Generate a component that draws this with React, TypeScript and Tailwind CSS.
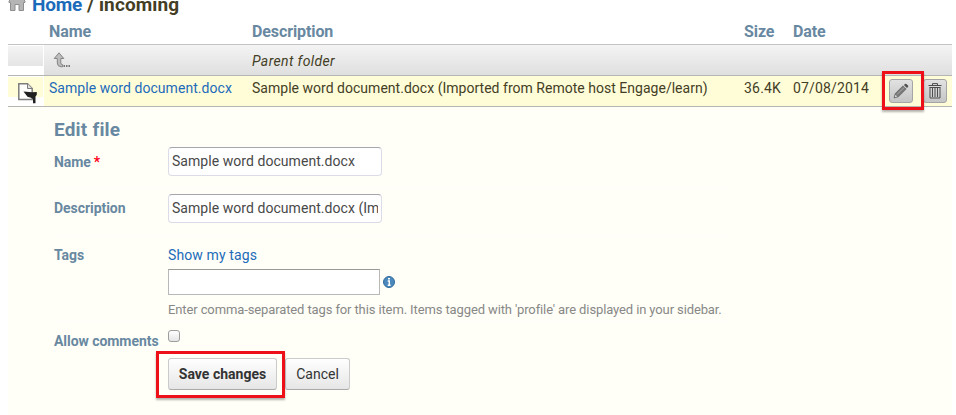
import React from "react";

const columns = "grid grid-cols-[36px_208px_492px_49px_96px_1fr]";

function HomeIcon() {
  return (
    <svg width="18" height="19" viewBox="0 0 18 19" className="block">
      <path d="M1 9 L9 1 L17 9 V10.5 H15.5 V18.5 H11 V12.5 H7 V18.5 H2.5 V10.5 H1Z" fill="#b5b5b5" stroke="#8e8e8e" />
    </svg>
  );
}

function ParentIcon() {
  return (
    <svg width="18" height="16" viewBox="0 0 18 16" className="block">
      <path d="M6 .8 L10.8 6.5 H7.8 V11 Q7.8 12.6 9.6 12.6 V14.8 H8.2 Q4.3 14.6 4.3 11 V6.5 H1.2Z" fill="#bdbdbd" stroke="#858585" strokeWidth="1" />
      <path d="M10.5 13.9H12M13 13.9H14.5M15.5 13.9H17" stroke="#777" strokeWidth="2" />
    </svg>
  );
}

function FileIcon() {
  return (
    <svg width="21" height="22" viewBox="0 0 21 22" className="block">
      <path d="M1.8 1.8 H10.5 L15.2 6.5 V17.5 H1.8Z" fill="#fdfdfb" stroke="#7d7d7d" strokeWidth="1.5" />
      <path d="M10.5 1.8 V6.5 H15.2" fill="#ddd" stroke="#7d7d7d" />
      <path d="M6.5 9.6 L15 10.2 L19.8 10 V12.8 L18.5 14.5 V21.3 H16 V17 L14 15.8 L10.5 14.8Z" fill="#202020" />
    </svg>
  );
}

function PencilIcon() {
  return (
    <svg width="16" height="16" viewBox="0 0 16 16" className="block">
      <path d="M1 15 L2.2 10.6 L10 2.8 L13.2 6 L5.4 13.8Z" fill="#787878" stroke="#5a5a5a" strokeWidth=".6" />
      <path d="M10.9 2 L12 .9 Q12.7 .4 13.4 1 L15 2.6 Q15.6 3.3 15 4 L14 5.1Z" fill="#505050" />
      <path d="M4.2 11.4 L11.2 4.4" stroke="#aaa" strokeWidth="1" />
      <path d="M2.4 11.8 L4.2 13.6 L1.9 14.2Z" fill="#ddd" />
    </svg>
  );
}

function TrashIcon() {
  return (
    <svg width="14" height="16" viewBox="0 0 14 16" className="block">
      <path d="M4.5 2 V.6 H9.5 V2 M.5 2.5 H13.5 M2 4.5 V15 H12 V4.5 M1.5 4.5 H12.5" fill="none" stroke="#4d4d4d" />
      <path d="M4.5 5V14 M7 5V14 M9.5 5V14" fill="none" stroke="#4d4d4d" />
    </svg>
  );
}

function IconButton({ children }: { children: React.ReactNode }) {
  return (
    <button className="flex size-6 items-center justify-center rounded-[3px] border border-[#a5a5a5] bg-linear-to-b from-[#e2e2e2] to-[#c5c5c5]">
      {children}
    </button>
  );
}

function Label({ children }: { children: React.ReactNode }) {
  return <div className="w-[114px] shrink-0 whitespace-nowrap font-bold tracking-[-0.05px] text-[#6888a1]">{children}</div>;
}

const inputClass =
  "block h-[29px] w-[214px] rounded-[4px] border border-[#dcdce8] border-t-[#a5a5ae] bg-white px-[3px] pb-px text-[14px] tracking-[0.05px] text-[#484848] outline-none";

export default function App() {
  return (
    <div className="h-[415px] w-[956px] overflow-hidden bg-white pl-2 pr-1 font-['Roboto',sans-serif] text-[14px] leading-5 text-[#433e25]">
      <div className="flex h-[20px] items-end overflow-hidden">
        <div className="mb-[9px] w-6 shrink-0"><HomeIcon /></div>
        <h1 className="mb-[3px] whitespace-nowrap text-[19px] font-bold leading-6">
          <span className="tracking-[-0.2px] text-[#1c6bba]">Home</span><span className="tracking-[0.13px]"> / incoming</span>
        </h1>
      </div>

      <div className={`${columns} h-[25px] border-b border-[#c4c4c4] text-[16px] font-bold leading-6 tracking-[-0.1px] text-[#6888a1]`}>
        <div />
        <div className="pl-[5px]">Name</div>
        <div>Description</div>
        <div>Size</div>
        <div>Date</div>
        <div />
      </div>

      <div className={`${columns} h-[31px] border-b border-[#b5b5b5]`}>
        <div className="mr-px mt-px h-5 bg-linear-to-b from-[#f4f4f4] to-[#e5e5e5]" />
        <div className="col-span-5 grid grid-cols-[208px_1fr] bg-linear-to-b from-[#f4f4f4] to-[#dfdfdf]">
          <div className="pl-[9px] pt-[7px]"><ParentIcon /></div>
          <div className="pt-[6px] italic tracking-[0.38px]">Parent folder</div>
        </div>
      </div>

      <div className={`${columns} relative h-[31px] border-b border-[#b5b5b5]`}>
        <div className="mr-px mt-px h-5 bg-[#fffcd8] pl-[9px] pt-[5px]"><FileIcon /></div>
        <div className="whitespace-nowrap bg-[#fffcd8] pl-[5px] pt-[2px] tracking-[0.05px] text-[#1c6bba]">Sample word document.docx</div>
        <div className="whitespace-nowrap bg-[#fffcd8] pt-[2px] tracking-[0.02px]">Sample word document.docx (Imported from Remote host Engage/learn)</div>
        <div className="bg-[#fffcd8] pt-[2px] tracking-[0.2px]">36.4K</div>
        <div className="bg-[#fffcd8] pt-[2px] tracking-[0.15px]">07/08/2014</div>
        <div className="flex gap-[10px] bg-[#fffcd8] pt-[3px]">
          <IconButton><PencilIcon /></IconButton>
          <IconButton><TrashIcon /></IconButton>
        </div>
        <div className="pointer-events-none absolute left-[874px] top-[-5px] h-[39px] w-[42px] border-3 border-[#ed1019] shadow-[0_2px_2px_rgba(0,0,0,.3)]" />
      </div>

      <form className="h-[308px] bg-[#fffff7] pl-[46px] pt-[11px]">
        <h2 className="h-6 text-[19px] font-bold leading-6 tracking-[0.2px] text-[#6888a1]">Edit file</h2>
        <div className="flex h-[47px] w-[674px] items-start border-b border-[#fefefd] pt-[5px]">
          <Label><div className="flex gap-[3px] pt-[5px]"><span>Name</span><span className="text-[#ff0018]">*</span></div></Label>
          <input className={inputClass} defaultValue="Sample word document.docx" />
        </div>
        <div className="flex h-[47px] w-[674px] items-start border-b border-[#fefefd] pt-[5px]">
          <Label><div className="pt-1">Description</div></Label>
          <input className={inputClass} defaultValue="Sample word document.docx (Imported from Remote host Engage/learn)" />
        </div>
        <div className="flex h-[86px] w-[674px] items-start border-b border-[#fefefd] pt-[9px]">
          <Label>Tags</Label>
          <div>
            <a className="block tracking-[0.12px] text-[#1c6bba]">Show my tags</a>
            <div className="mt-[4px] flex items-center">
              <input className="h-[26px] w-[212px] border border-[#b8b8b8] border-t-[#999] bg-white outline-none" />
              <svg width="12" height="12" viewBox="0 0 12 12" className="ml-[3px]">
                <circle cx="6" cy="6" r="5.5" fill="#4b88bb" stroke="#326b9e" />
                <path d="M5 2.8H7M4.7 5H6.3V9.3M4.7 9.3H7.6" fill="none" stroke="white" strokeWidth="1.4" />
              </svg>
            </div>
            <p className="mt-[6px] whitespace-nowrap text-[13px] leading-[18px] tracking-[-0.115px] text-[#888]">Enter comma-separated tags for this item. Items tagged with 'profile' are displayed in your sidebar.</p>
          </div>
        </div>
        <div className="flex h-[36px] items-start pt-[9px]">
          <Label>Allow comments</Label>
          <input type="checkbox" className="mt-[-1px] size-3 appearance-none rounded-[3px] border border-[#9c9c9c] bg-linear-to-b from-white to-[#e5e5e5]" />
        </div>
        <div className="relative ml-[114px] flex gap-[8px]">
          <button className="h-8 w-[109px] rounded-[3px] border border-[#cbcbcb] border-b-[#aaa] bg-linear-to-b from-white to-[#e6e6e6] font-bold text-[#333]">Save changes</button>
          <button className="h-8 w-[65px] rounded-[3px] border border-[#cbcbcb] border-b-[#aaa] bg-linear-to-b from-white to-[#e6e6e6] text-[#333]">Cancel</button>
          <div className="pointer-events-none absolute left-[-12px] top-[-7px] h-[47px] w-[129px] border-3 border-[#ed1019] shadow-[0_2px_2px_rgba(0,0,0,.3)]" />
        </div>
      </form>
    </div>
  );
}
